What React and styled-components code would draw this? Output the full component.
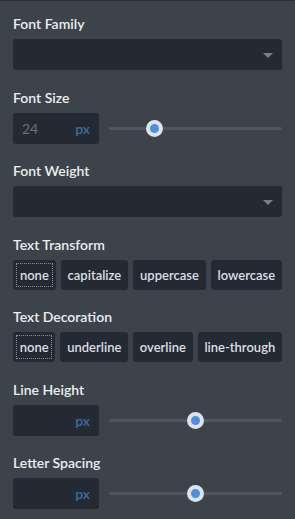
import React, { useState } from "react";
import styled, { createGlobalStyle } from "styled-components";

const GlobalStyle = createGlobalStyle`
  html, body {
    margin: 0;
    padding: 0;
    background: #3d434b;
  }
  * {
    box-sizing: border-box;
  }
`;

const Panel = styled.div`
  width: 295px;
  min-height: 519px;
  background: #3d434b;
  border-top: 1px solid #2a2e34;
  padding: 15px 13px 10px 13px;
  display: flex;
  flex-direction: column;
  gap: 19.5px;
  font-family: "Lato", "Liberation Sans", sans-serif;
`;

const Field = styled.div`
  display: flex;
  flex-direction: column;
`;

const Label = styled.div`
  font-size: 14px;
  line-height: 16px;
  font-weight: 600;
  color: #eceef0;
  margin-bottom: 7px;
`;

const SelectBox = styled.div`
  position: relative;
  height: 31px;
  background: #242a33;
  border-radius: 3px;
`;

const Caret = styled.span`
  position: absolute;
  right: 9px;
  top: 14px;
  width: 0;
  height: 0;
  border-left: 5px solid transparent;
  border-right: 5px solid transparent;
  border-top: 5px solid #7a7f87;
`;

const Row = styled.div`
  display: flex;
  align-items: center;
  gap: 10px;
`;

const NumberBox = styled.div`
  width: 86px;
  height: 31px;
  background: #242a33;
  border-radius: 3px;
  display: flex;
  align-items: center;
  justify-content: space-between;
  padding: 0 9px 0 9px;
  font-size: 14px;
`;

const Value = styled.span`
  color: #6b7079;
`;

const Unit = styled.span`
  color: #3b6d9e;
  font-weight: 600;
`;

const Range = styled.input.attrs({ type: "range", min: 0, max: 100 })`
  -webkit-appearance: none;
  appearance: none;
  flex: 1;
  margin: 0;
  height: 17px;
  background: transparent;

  &::-webkit-slider-runnable-track {
    height: 3px;
    background: #50565e;
    border-radius: 2px;
  }

  &::-webkit-slider-thumb {
    -webkit-appearance: none;
    width: 17px;
    height: 17px;
    margin-top: -7px;
    border-radius: 50%;
    background: #4a90e2;
    border: 4.5px solid #dfe2e6;
  }

  &:focus {
    outline: none;
  }
`;

const Buttons = styled.div`
  display: flex;
  gap: 5px;
`;

const OptionButton = styled.button`
  flex: 1 1 auto;
  height: 30px;
  padding: 0 6px;
  border: none;
  border-radius: 3px;
  background: #242a33;
  color: #dcdfe3;
  font-family: inherit;
  font-size: 13px;
  font-weight: 600;
  white-space: nowrap;
  cursor: pointer;
  outline: ${(p) => (p.$active ? "1px dotted #8a8f96" : "none")};
  outline-offset: -4px;
`;

const Select = () => (
  <SelectBox>
    <Caret />
  </SelectBox>
);

const NumberSlider = ({ value, initial }) => {
  const [v, setV] = useState(initial);
  return (
    <Row>
      <NumberBox>
        <Value>{value}</Value>
        <Unit>px</Unit>
      </NumberBox>
      <Range value={v} onChange={(e) => setV(e.target.value)} />
    </Row>
  );
};

const Options = ({ items }) => {
  const [sel, setSel] = useState(items[0]);
  return (
    <Buttons>
      {items.map((it) => (
        <OptionButton key={it} $active={sel === it} onClick={() => setSel(it)}>
          {it}
        </OptionButton>
      ))}
    </Buttons>
  );
};

const App = () => (
  <>
    <GlobalStyle />
    <Panel>
      <Field>
        <Label>Font Family</Label>
        <Select />
      </Field>
      <Field>
        <Label>Font Size</Label>
        <NumberSlider value="24" initial={24} />
      </Field>
      <Field>
        <Label>Font Weight</Label>
        <Select />
      </Field>
      <Field>
        <Label>Text Transform</Label>
        <Options items={["none", "capitalize", "uppercase", "lowercase"]} />
      </Field>
      <Field>
        <Label>Text Decoration</Label>
        <Options items={["none", "underline", "overline", "line-through"]} />
      </Field>
      <Field>
        <Label>Line Height</Label>
        <NumberSlider value="" initial={50} />
      </Field>
      <Field>
        <Label>Letter Spacing</Label>
        <NumberSlider value="" initial={50} />
      </Field>
    </Panel>
  </>
);

export default App;
